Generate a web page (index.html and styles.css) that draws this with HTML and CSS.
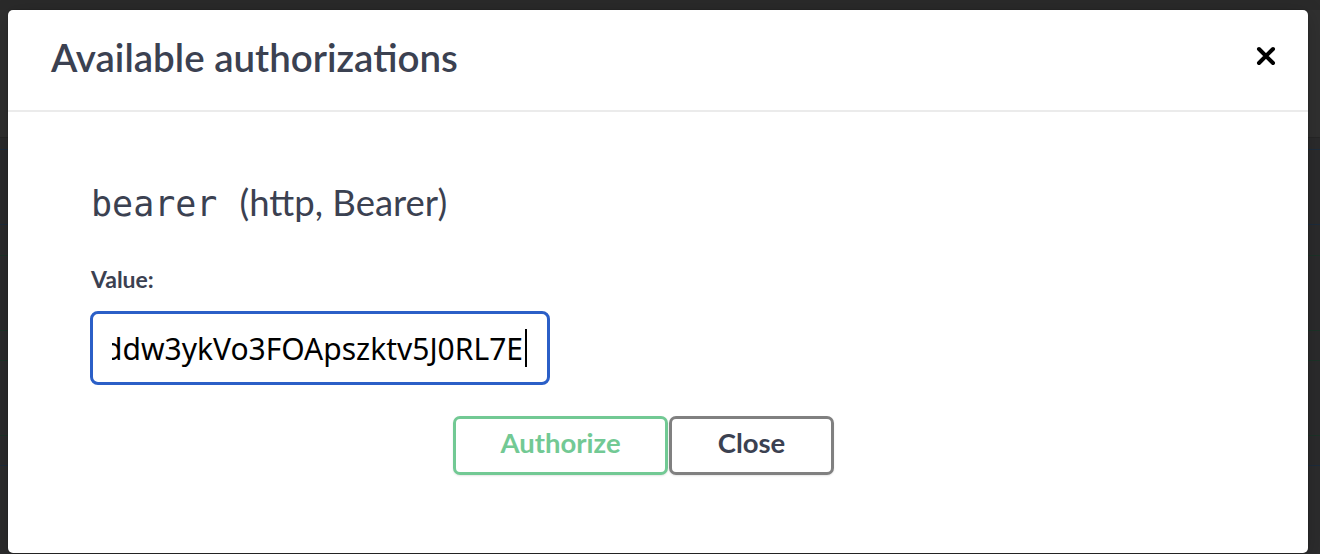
FILE: index.html
```html
<!DOCTYPE html>
<html>
<head>
<meta charset="utf-8">
<link rel="stylesheet" href="styles.css">
</head>
<body>
<div class="page">
  <div class="band-top"></div>
  <div class="band-info"></div>
  <div class="ops">
    <div class="line dark"></div>
    <div class="row r11"></div><div class="line blue"></div>
    <div class="row r74"></div><div class="line blue"></div>
    <div class="row r30"></div><div class="line green"></div>
    <div class="row r74"></div><div class="line green"></div>
    <div class="row r29"></div><div class="line green"></div>
    <div class="row r74"></div><div class="line green"></div>
    <div class="row r29"></div><div class="line blue"></div>
  </div>
</div>
<div class="modal">
  <div class="modal-header">
    <h3 class="modal-title">Available authorizations</h3>
    <button class="close-x" aria-label="close">
      <svg width="20" height="20" viewBox="0 0 20 20"><path d="M3 3 L17 17 M17 3 L3 17" stroke="#000" stroke-width="4" stroke-linecap="round"/></svg>
    </button>
  </div>
  <div class="modal-content">
    <h4 class="scheme"><code class="scheme-name">bearer</code><span class="scheme-type">(http, Bearer)</span></h4>
    <label class="value-label">Value:</label>
    <div class="input-box">
      <div class="input-clip"><span class="input-text">ddw3ykVo3FOApszktv5J0RL7E</span><span class="caret"></span></div>
    </div>
    <div class="btns">
      <button class="btn authorize">Authorize</button>
      <button class="btn close">Close</button>
    </div>
  </div>
</div>
</body>
</html>
```
FILE: styles.css
```css
html, body {
  margin: 0;
  padding: 0;
  height: 100%;
  overflow: hidden;
}
body {
  background: #2c2c2d;
  font-family: Lato, "Noto Sans", sans-serif;
  position: relative;
}
.page {
  display: flex;
  flex-direction: column;
}
.band-top {
  height: 10px;
  background: #2a2a2a;
}
.band-info {
  height: 127px;
  background: #303030;
}
.ops {
  display: flex;
  flex-direction: column;
  background: #2b2b2c;
}
.line { height: 1px; }
.line.dark { background: #262626; }
.line.blue { background: #1d2c3c; }
.line.green { background: #1c3328; }
.row.r11 { height: 11px; }
.row.r74 { height: 74px; }
.row.r30 { height: 30px; }
.row.r29 { height: 29px; }

.modal {
  position: absolute;
  left: 8px;
  top: 10px;
  width: 1300px;
  height: 543px;
  background: #fff;
  border-radius: 5px;
  box-shadow: 0 0 0 1px rgba(0,0,0,0.08), 0 4px 20px rgba(0,0,0,0.2);
  display: flex;
  flex-direction: column;
}
.modal-header {
  box-sizing: border-box;
  height: 102px;
  border-bottom: 2px solid #ebebeb;
  display: flex;
  align-items: flex-start;
  justify-content: space-between;
  padding: 24px 32px 0 43px;
  flex-shrink: 0;
}
.modal-title {
  margin: 0;
  font-size: 38.5px;
  line-height: 47px;
  font-weight: 600;
  color: #3b4151;
}
.close-x {
  background: none;
  border: 0;
  padding: 0;
  margin-top: 12px;
  width: 20px;
  height: 20px;
  display: flex;
}
.modal-content {
  display: flex;
  flex-direction: column;
  align-items: flex-start;
  padding: 69px 0 0 83px;
}
.scheme {
  margin: 0;
  font-size: 36px;
  line-height: 42px;
  color: #3b4151;
  font-weight: 400;
  white-space: nowrap;
}
.scheme-name {
  font-family: "DejaVu Sans Mono", monospace;
  font-size: 35px;
  line-height: 42px;
  margin-right: 22px;
}
.scheme-type {
  font-size: 36.5px;
}
.value-label {
  display: block;
  margin-top: 40px;
  font-size: 23px;
  line-height: 28px;
  font-weight: 700;
  color: #3b4151;
}
.input-box {
  margin-top: 18px;
  margin-left: -1px;
  box-sizing: border-box;
  width: 460px;
  height: 74px;
  border: 3px solid #2b5fc7;
  border-radius: 8px;
  display: flex;
  align-items: center;
  padding: 0 20px 0 19px;
}
.input-clip {
  flex: 1;
  overflow: hidden;
  display: flex;
  justify-content: flex-end;
  align-items: center;
  white-space: nowrap;
}
.input-text {
  font-family: "Noto Sans", sans-serif;
  font-size: 30px;
  color: #000;
}
.caret {
  width: 2px;
  height: 38px;
  background: #000;
  margin-left: 2px;
  flex-shrink: 0;
}
.btns {
  width: 1105px;
  display: flex;
  justify-content: center;
  gap: 1px;
  margin-top: 31px;
}
.btn {
  box-sizing: border-box;
  height: 59px;
  background: #fff;
  border-radius: 7px;
  font-family: Lato, "Noto Sans", sans-serif;
  font-size: 27.5px;
  font-weight: 700;
  box-shadow: 0 1px 2px rgba(0,0,0,0.1);
  padding: 0 0 7px;
}
.btn.authorize {
  width: 215px;
  border: 3px solid #72c994;
  color: #72c994;
}
.btn.close {
  width: 165px;
  border: 3px solid #808080;
  color: #3b4151;
}
```
